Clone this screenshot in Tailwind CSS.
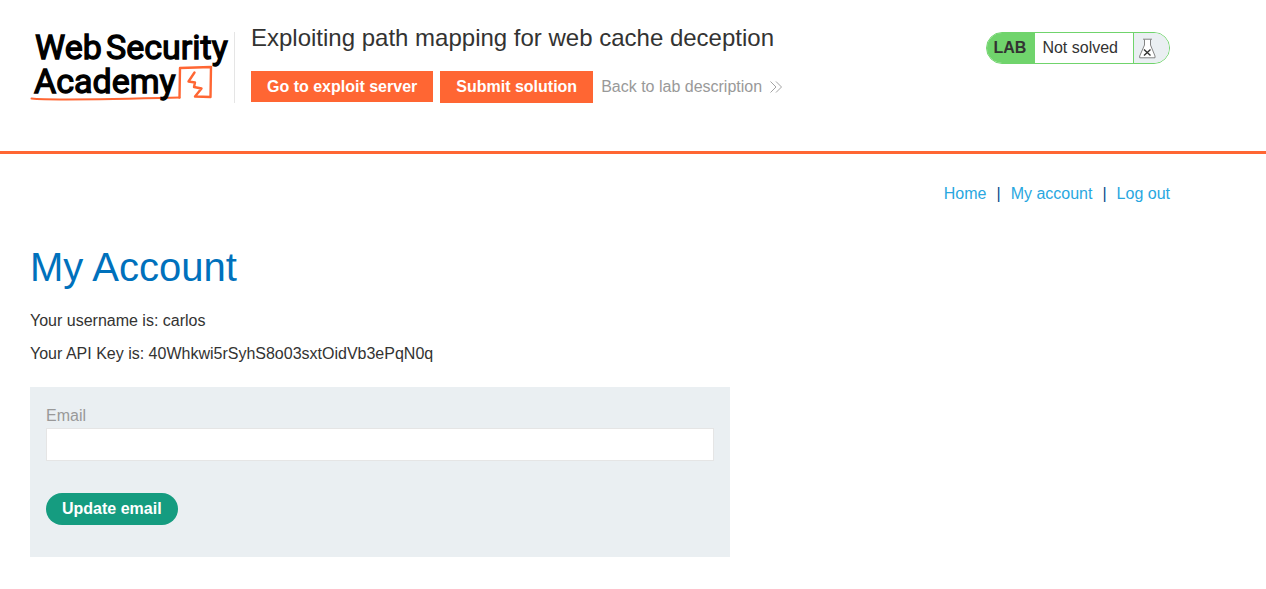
<!DOCTYPE html>
<html lang="en">
<head>
<meta charset="utf-8">
<meta name="viewport" content="width=device-width, initial-scale=1">
<title>Exploiting path mapping for web cache deception</title>
<script src="https://cdn.jsdelivr.net/npm/@tailwindcss/browser@4"></script>
</head>
<body class="bg-white font-['Liberation_Sans',Arial,sans-serif] text-base text-[#333332]">
<header class="border-b-3 border-[#ff6633] pt-5 pb-12">
  <div class="mx-[30px] flex max-w-[1140px] items-start justify-between">
    <div class="flex items-start">
      <a href="#" aria-label="Web Security Academy" class="mt-3 border-r border-[#e5e5e5] pr-1">
        <svg class="block overflow-visible" width="200" height="71" viewBox="0 0 200 71" fill="none">
          <g stroke="#ff6633" stroke-linejoin="round" stroke-linecap="round">
            <path d="M1.500 66.500C20 68.500 70 67.500 149.500 65.500" stroke-width="2"/>
            <path d="M149.500 65.500L150 36L181 35L180.500 65L165 64.500L171.500 56.500L164 55L165 50.500L158.500 49.500L164.500 40.500" stroke-width="2.400"/>
          </g>
          <g fill="#000" stroke="#000" stroke-width="1.3" font-family="Roboto, sans-serif" font-size="34" font-weight="400">
            <text x="5" y="27">Web</text>
            <text x="76" y="27">Security</text>
            <text x="4" y="61">Academy</text>
          </g>
        </svg>
      </a>
      <div class="ml-4">
        <h1 class="text-2xl leading-9">Exploiting path mapping for web cache deception</h1>
        <div class="mt-[15px] flex items-start">
          <button type="button" class="mr-[7px] h-[31px] bg-[#ff6633] px-4 font-bold text-white">Go to exploit server</button>
          <button type="button" class="mr-2 h-8 bg-[#ff6633] px-4 font-bold text-white">Submit solution</button>
          <a href="#" class="flex h-8 items-center gap-2 text-[#999]">Back to lab description
            <svg class="block" width="12" height="12" viewBox="0 0 12 12" fill="none" stroke="#999" stroke-width="0.9"><path d="M.5.500L6 6L.5 11.500M6 .5L11.500 6L6 11.500"/></svg>
          </a>
        </div>
      </div>
    </div>
    <div class="mt-3 flex h-8 overflow-hidden rounded-full border border-[#70d46c]">
      <span class="flex items-center bg-[#70d46c] px-[7px] pr-[9px] font-bold">LAB</span>
      <span class="flex items-center pr-[15px] pl-[7px]">Not solved</span>
      <span class="flex w-9 items-center border-l border-[#70d46c] bg-[#eaeff2] pl-[5px]">
        <svg class="block" width="17" height="21" viewBox="0 0 17 21" fill="none">
          <path d="M5.500 1.500V7L1 18V19.500H16V18L11.500 7V1.500Z" fill="#fff"/>
          <path d="M4 1.200H13M5.500 1.500V7L.7 18V19.800H16V18L11.500 7V1.500" stroke="#777" stroke-width="0.900"/>
          <path d="M5 11.500L11.500 17.500M11.500 11.500L5 17.500" stroke="#333332" stroke-width="1.400"/>
        </svg>
      </span>
    </div>
  </div>
</header>
<main class="mx-[30px] max-w-[1140px] pt-7">
  <nav class="flex justify-end gap-[10px] leading-6 text-[#29a7df]">
    <a href="#">Home</a><span class="text-[#094b8c]">|</span><a href="#">My account</a><span class="text-[#094b8c]">|</span><a href="#">Log out</a>
  </nav>
  <h2 class="mt-9 text-[40px] leading-[50px] text-[#0071bc]">My Account</h2>
  <p class="mt-[17px] leading-6">Your username is: carlos</p>
  <p class="mt-[9px] leading-6">Your API Key is: 40Whkwi5rSyhS8o03sxtOidVb3ePqN0q</p>
  <form class="mt-[21px] max-w-[700px] bg-[#eaeff2] px-4 pt-[17px] pb-8">
    <label for="email" class="block leading-6 text-[#999]">Email</label>
    <input id="email" type="email" class="block h-[33px] w-full border border-[#e5e5e5] bg-white px-2">
    <button type="button" class="mt-8 block h-8 rounded-full bg-[#159c80] px-4 font-bold text-white">Update email</button>
  </form>
</main>
</body>
</html>
